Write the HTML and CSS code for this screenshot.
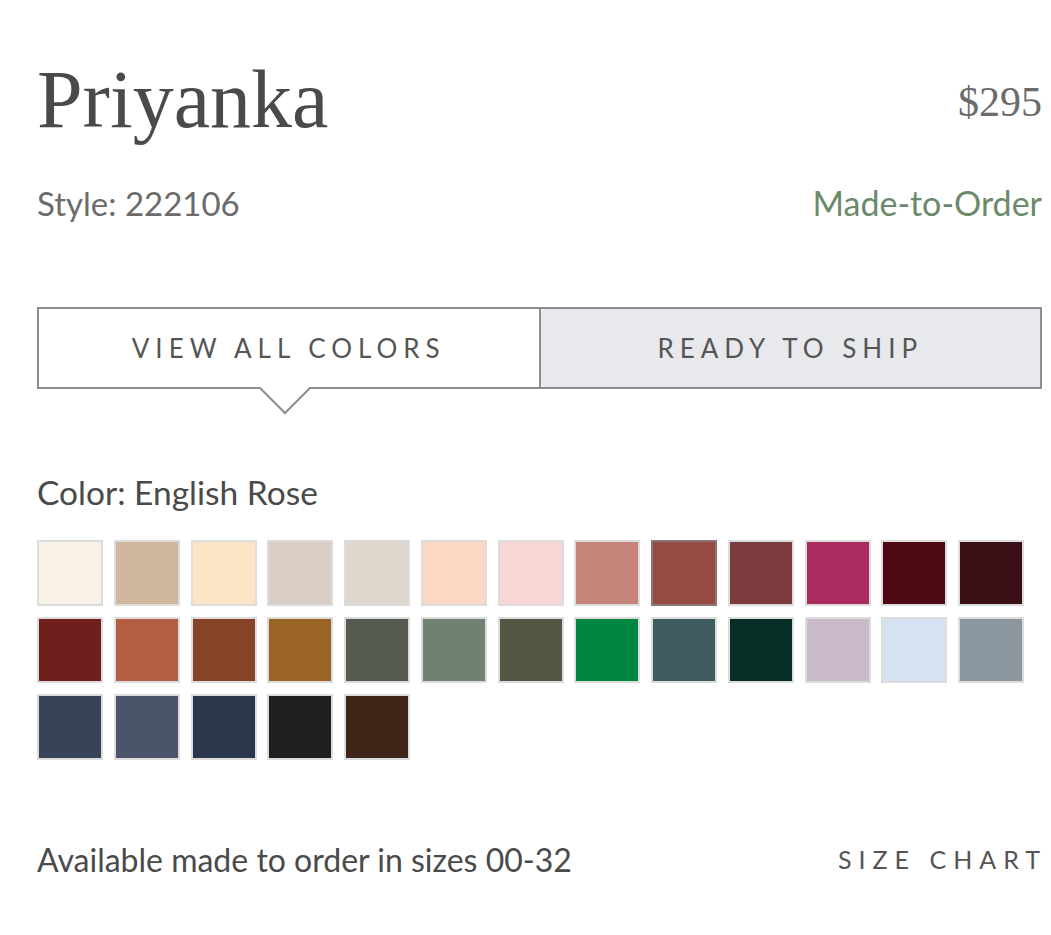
FILE: index.html
```html
<!DOCTYPE html>
<html>
<head>
<meta charset="utf-8">
<link rel="stylesheet" href="styles.css">
</head>
<body>
<div class="product">
  <div class="head-row">
    <h1 class="title">Priyanka</h1>
    <div class="price">$295</div>
  </div>
  <div class="meta-row">
    <div class="style">Style: 222106</div>
    <div class="mto">Made-to-Order</div>
  </div>
  <div class="tabs">
    <div class="tab tab-active">VIEW ALL COLORS<span class="pointer"></span></div>
    <div class="tab tab-inactive">READY TO SHIP</div>
  </div>
  <div class="color-label">Color: English Rose</div>
  <div class="swatches">
    <span class="sw" style="background:#f8f2e6"></span>
    <span class="sw" style="background:#cfb69c"></span>
    <span class="sw" style="background:#fce5c5"></span>
    <span class="sw" style="background:#d9cdc5"></span>
    <span class="sw" style="background:#dfd6ce"></span>
    <span class="sw" style="background:#fdd9c5"></span>
    <span class="sw" style="background:#f9d6d6"></span>
    <span class="sw" style="background:#c5837a"></span>
    <span class="sw sw-selected" style="background:#954b44"></span>
    <span class="sw" style="background:#7c3b3c"></span>
    <span class="sw" style="background:#ab2b5e"></span>
    <span class="sw" style="background:#4f0913"></span>
    <span class="sw" style="background:#3a1016"></span>
    <span class="sw" style="background:#6f1f1b"></span>
    <span class="sw" style="background:#b15e43"></span>
    <span class="sw" style="background:#874527"></span>
    <span class="sw" style="background:#9a6425"></span>
    <span class="sw" style="background:#545a4f"></span>
    <span class="sw" style="background:#6f8272"></span>
    <span class="sw" style="background:#535845"></span>
    <span class="sw" style="background:#008640"></span>
    <span class="sw" style="background:#3d5b61"></span>
    <span class="sw" style="background:#052e27"></span>
    <span class="sw" style="background:#c9bbca"></span>
    <span class="sw" style="background:#d4e2f2"></span>
    <span class="sw" style="background:#8c969f"></span>
    <span class="sw" style="background:#374356"></span>
    <span class="sw" style="background:#4c546a"></span>
    <span class="sw" style="background:#2b374c"></span>
    <span class="sw" style="background:#202020"></span>
    <span class="sw" style="background:#3f2418"></span>
  </div>
  <div class="foot-row">
    <div class="avail">Available made to order in sizes 00-32</div>
    <div class="size-chart">SIZE CHART</div>
  </div>
</div>
</body>
</html>
```
FILE: styles.css
```css
html, body {
  margin: 0;
  padding: 0;
  background: #ffffff;
}
.product {
  width: 1005px;
  margin-left: 37px;
  padding-top: 59px;
  font-family: Lato, "Open Sans", sans-serif;
}
.head-row {
  display: flex;
  justify-content: space-between;
  align-items: flex-start;
}
.title {
  margin: 0;
  font-family: "Liberation Serif", "Times New Roman", serif;
  font-weight: normal;
  font-size: 82px;
  line-height: 82px;
  color: #4a4a4a;
}
.price {
  margin-top: 22px;
  font-family: "Liberation Serif", "Times New Roman", serif;
  font-size: 42px;
  line-height: 42px;
  color: #6b6b6b;
}
.meta-row {
  margin-top: 45px;
  display: flex;
  justify-content: space-between;
  align-items: flex-start;
  line-height: 34px;
}
.style {
  font-size: 33px;
  line-height: 34px;
  color: #6b6b6b;
}
.mto {
  font-size: 34px;
  line-height: 34px;
  color: #6b8a6b;
}
.tabs {
  margin-top: 87px;
  display: flex;
  height: 82px;
  box-sizing: border-box;
  border: 2px solid #8a8d92;
}
.tab {
  flex: 1;
  display: flex;
  align-items: center;
  justify-content: center;
  font-size: 26px;
  letter-spacing: 6px;
  color: #555555;
  position: relative;
}
.tab-active {
  background: #ffffff;
  border-right: 2px solid #8a8d92;
}
.tab-inactive {
  background: #e8e9ec;
}
.pointer {
  position: absolute;
  left: 50%;
  bottom: -20px;
  width: 36px;
  height: 36px;
  margin-left: -22px;
  background: #ffffff;
  border-right: 2px solid #8a8d92;
  border-bottom: 2px solid #8a8d92;
  transform: rotate(45deg);
  box-sizing: border-box;
}
.color-label {
  margin-top: 87px;
  font-size: 33.5px;
  line-height: 33px;
  color: #4a4a4a;
}
.swatches {
  margin-top: 31px;
  display: grid;
  grid-template-columns: repeat(13, 66px);
  column-gap: 10.75px;
  row-gap: 11px;
}
.sw {
  display: block;
  width: 66px;
  height: 66px;
  box-sizing: border-box;
  border: 2px solid #dcdcdc;
}
.sw-selected {
  border-color: #8a7676;
}
.foot-row {
  margin-top: 84px;
  display: flex;
  justify-content: space-between;
  align-items: flex-start;
}
.avail {
  font-size: 32px;
  line-height: 32px;
  color: #4a4a4a;
}
.size-chart {
  margin-top: 3px;
  font-size: 25px;
  line-height: 25px;
  letter-spacing: 7px;
  color: #555555;
  margin-right: -5px;
}
```
